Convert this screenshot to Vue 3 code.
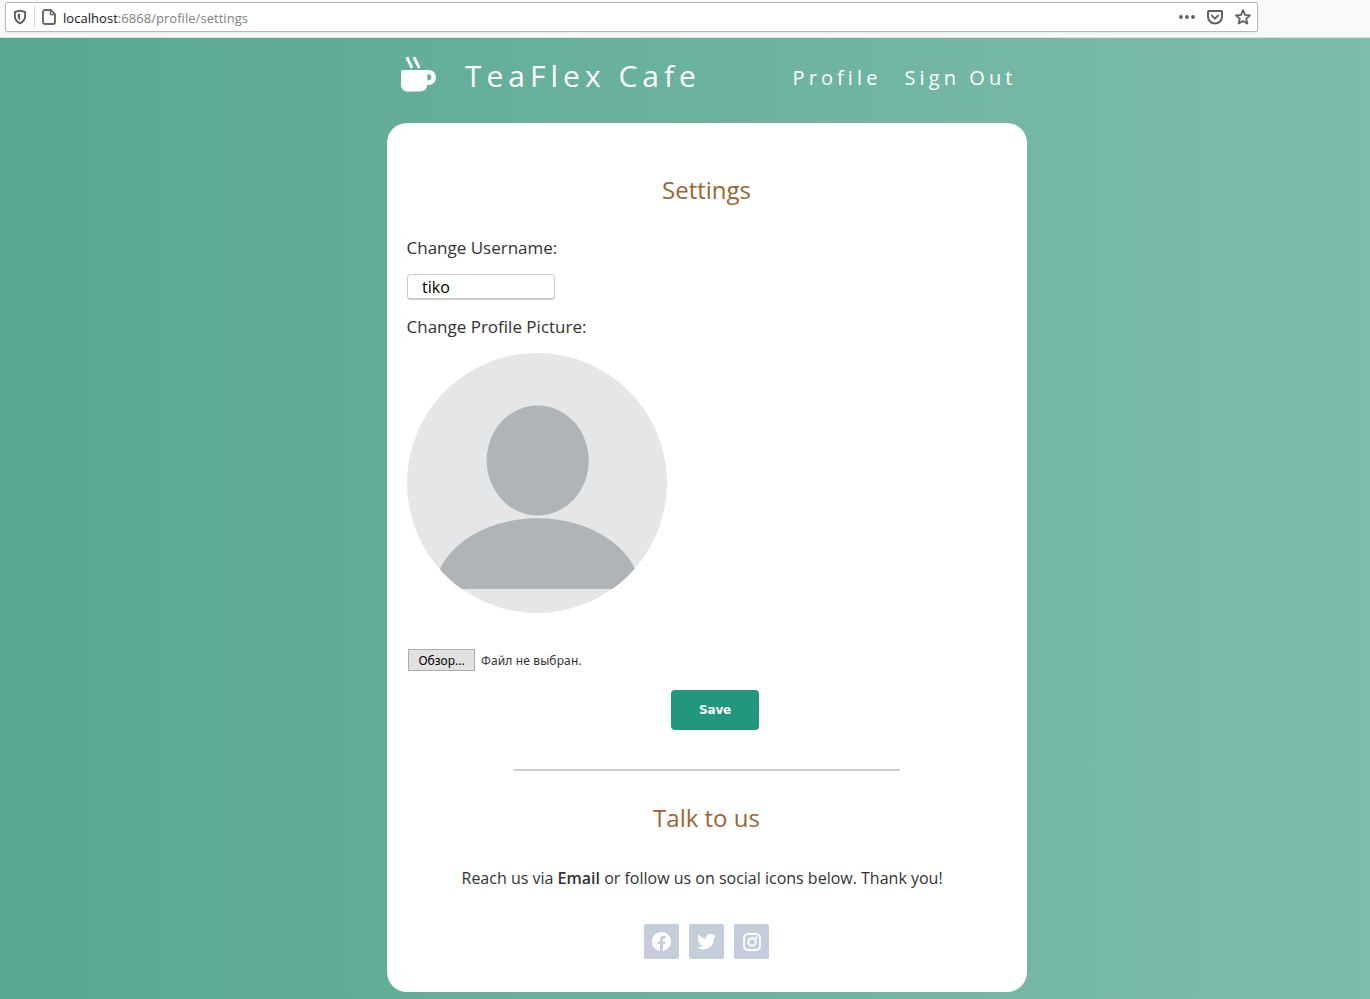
<script setup>
const nav = ['Profile', 'Sign Out']
</script>

<template>
  <div class="page">
    <div class="toolbar">
      <div class="urlbar">
        <svg class="shield" width="14" height="16" viewBox="0 0 14 16">
          <path d="M7 1.7 12.1 3v4.2c0 3.3-1.9 5.6-5.1 7.1-3.2-1.5-5.1-3.8-5.1-7.1V3z" fill="none" stroke="#5c5c5c" stroke-width="1.9" stroke-linejoin="round" />
          <path d="M7 4.6v6.8C5.400 10.300 4.700 9 4.700 7.200V5.100z" fill="#5c5c5c" />
        </svg>
        <span class="split"></span>
        <svg class="doc" width="14" height="16" viewBox="0 0 14 16">
          <path d="M3 1h5.700L13 5.300V13a2 2 0 0 1-2 2H3a2 2 0 0 1-2-2V3a2 2 0 0 1 2-2z" fill="none" stroke="#666" stroke-width="1.900" />
          <path d="M8.500 1v4.600H13" fill="none" stroke="#666" stroke-width="1.300" />
        </svg>
        <span class="url"><b>localhost</b>:6868/profile/settings</span>
        <div class="actions">
          <svg width="16" height="16" viewBox="0 0 16 16" fill="#5f5f5f">
            <circle cx="2" cy="8" r="1.900" /><circle cx="8" cy="8" r="1.900" /><circle cx="14" cy="8" r="1.900" />
          </svg>
          <svg width="16" height="16" viewBox="0 0 16 16" fill="none" stroke="#5f5f5f" stroke-width="2" stroke-linecap="round" stroke-linejoin="round">
            <path d="M1.900 2h12.200a.9.9 0 0 1 .9.900V7.500a7 7 0 0 1-14 0V2.900a.9.9 0 0 1 .9-.9z" />
            <path d="M4.900 6.600 8 9.600l3.100-3" />
          </svg>
          <svg width="16" height="16" viewBox="0 0 16 16" fill="none" stroke="#5f5f5f" stroke-width="1.800" stroke-linejoin="round">
            <path d="m8 1.200 2 4.600 5 .5-3.800 3.300 1.100 5L8 12l-4.300 2.600 1.100-5L1 6.300l5-.5z" />
          </svg>
        </div>
      </div>
    </div>

    <div class="wrap">
      <header>
        <svg class="cup" width="36" height="36" viewBox="0 0 36 36">
          <path fill-rule="evenodd" d="M1 14.700Q1 12.900 2.800 12.900H28.300c4.500 0 7.700 3.100 7.700 7.500s-3.200 7.600-7.700 7.600H27.200c-.3 3.900-3.100 6.400-7 6.400H8c-4.200 0-7-2.700-7-7zM27.400 17.300v6.100h.9a3.050 3.050 0 0 0 0-6.100z" fill="#fff" />
          <path d="M7.300 0C7.500 5.400 11.300 5.600 11.500 11.100M14.500 0c.2 5.400 4 5.600 4.200 11.100" fill="none" stroke="#fff" stroke-width="3" />
        </svg>
        <span class="brand">TeaFlex Cafe</span>
        <nav><a v-for="item in nav" :key="item">{{ item }}</a></nav>
      </header>

      <main>
        <h1>Settings</h1>
        <label class="name-label">Change Username:</label>
        <input type="text" value="tiko" />
        <label class="pic-label">Change Profile Picture:</label>
        <svg class="avatar" width="260" height="260" viewBox="0 0 260 260">
          <defs>
            <clipPath id="round"><circle cx="130" cy="130" r="130" /></clipPath>
            <clipPath id="chest"><rect width="260" height="236" /></clipPath>
          </defs>
          <circle cx="130" cy="130" r="130" fill="#e4e6e7" />
          <ellipse cx="130.700" cy="107.500" rx="51" ry="55" fill="#aeb4b7" />
          <g clip-path="url(#round)">
            <ellipse cx="130.500" cy="241.200" rx="103.500" ry="76" fill="#aeb4b7" clip-path="url(#chest)" />
          </g>
        </svg>
        <div class="file"><button class="browse">Обзор...</button><span>Файл не выбран.</span></div>
        <button class="save">Save</button>
        <hr />
        <h2>Talk to us</h2>
        <p>Reach us via <b>Email</b> or follow us on social icons below. Thank you!</p>
        <div class="social">
          <a>
            <svg width="19" height="19" viewBox="0 0 24 24" fill="#fff"><path d="M24 12.073C24 5.400 18.627 0 12 0S0 5.400 0 12.073C0 18.100 4.388 23.094 10.125 24v-8.437H7.078v-3.490h3.047V9.410c0-3.025 1.792-4.697 4.533-4.697 1.312 0 2.686.236 2.686.236v2.971H15.830c-1.491 0-1.956.930-1.956 1.886v2.267h3.328l-.532 3.490h-2.796V24C19.612 23.094 24 18.100 24 12.073z" /></svg>
          </a>
          <a>
            <svg width="19" height="19" viewBox="0 0 24 24" fill="#fff"><path d="M23.954 4.569a10 10 0 0 1-2.825.775 4.958 4.958 0 0 0 2.163-2.723 9.990 9.990 0 0 1-3.127 1.184 4.920 4.920 0 0 0-8.384 4.482C7.691 8.094 4.066 6.130 1.640 3.161a4.822 4.822 0 0 0-.666 2.475c0 1.710.870 3.213 2.188 4.096a4.904 4.904 0 0 1-2.228-.616v.061a4.923 4.923 0 0 0 3.946 4.827 4.996 4.996 0 0 1-2.212.085 4.937 4.937 0 0 0 4.604 3.417 9.868 9.868 0 0 1-6.102 2.105c-.390 0-.779-.023-1.170-.067a13.995 13.995 0 0 0 7.557 2.209c9.054 0 13.999-7.496 13.999-13.986 0-.209 0-.420-.015-.630a9.936 9.936 0 0 0 2.460-2.548z" /></svg>
          </a>
          <a>
            <svg width="18" height="18" viewBox="0 0 18 18" fill="none" stroke="#fff"><rect x="1" y="1" width="16" height="16" rx="4.300" stroke-width="1.800" /><circle cx="9" cy="9" r="3.700" stroke-width="2" /><circle cx="13.600" cy="4.400" r="1.250" fill="#fff" stroke="none" /></svg>
          </a>
        </div>
      </main>
    </div>
  </div>
</template>

<style>
body { margin: 0; overflow: hidden; }
</style>

<style scoped>
* { box-sizing: border-box; }
.page { height: 999px; overflow: hidden; font-family: "Open Sans", sans-serif; color: #333; background: linear-gradient(90deg, #58a791, #7ebdac); }
.toolbar { height: 38px; background: #f9f9fa; border-bottom: 1px solid #dcdfde; padding: 2px 0 0 5px; }
.urlbar { width: 1253px; height: 30px; background: #fff; border: 1px solid #b9b9b9; border-radius: 2px; box-shadow: 0 1px 3px rgba(0, 0, 0, .08); display: flex; align-items: center; padding: 0 6px 0 7px; }
.split { width: 1px; height: 22px; background: #ddd; margin: 0 7px; }
.url { margin-left: 7px; font-size: 13px; letter-spacing: .04px; color: #808080; padding-top: 2px; white-space: nowrap; }
.url b { font-weight: 400; color: #111; }
.actions { margin-left: auto; display: flex; gap: 12px; }
.wrap { width: 640px; margin-left: 387px; }
header { height: 85px; padding: 19px 0 0 13px; display: flex; color: #fff; }
.cup { overflow: visible; }
.brand { margin: -2px 0 0 29px; font-size: 30px; line-height: 42px; letter-spacing: 5px; width: 327.5px; white-space: nowrap; }
nav { display: flex; gap: 23px; font-size: 20px; line-height: 42px; letter-spacing: 4.1px; white-space: nowrap; }
main { height: 869px; background: #fff; border-radius: 20px; padding: 49px 20px 0; display: flex; flex-direction: column; align-items: flex-start; }
h1, h2 { margin: 0 1px 0 0; font-size: 24px; font-weight: 400; line-height: 36px; color: #996633; align-self: center; }
label { font-size: 17px; line-height: 26px; margin-left: -.5px; }
.name-label { margin-top: 27px; }
input { margin-top: 13px; width: 148px; height: 26px; border: 1px solid #ccc; border-bottom-width: 2px; border-radius: 4px; padding: 0 14px; font: 16px "Open Sans", sans-serif; color: #000; outline: 0; background: #fff; }
.pic-label { margin-top: 14px; }
.avatar { display: block; margin-top: 13px; }
.file { display: flex; align-items: center; margin: 36px 0 0 1px; font: 12px "Noto Sans", sans-serif; letter-spacing: .13px; white-space: nowrap; }
.browse { width: 67px; height: 22px; border: 1px solid #adadad; background: #e1e1e1; padding: 0; font: inherit; color: #000; margin-right: 6px; }
.save { margin: 19px 0 0 264px; width: 88px; height: 40px; border: 0; border-radius: 4px; background: #23967f; color: #fff; font: bold 12px "DejaVu Sans", sans-serif; letter-spacing: -.2px; padding: 0; }
hr { width: 386px; height: 2px; border: 0; background: #ccc; margin: 39px auto 0; }
h2 { margin-top: 29px; }
p { margin: 30px 0 0 54.5px; font-size: 16px; line-height: 24px; white-space: nowrap; }
p b { font-weight: 600; }
.social { display: flex; gap: 10px; margin: 34px 0 0 237px; }
.social a { width: 35px; height: 35px; border-radius: 2px; background: #c5cdda; display: flex; align-items: center; justify-content: center; }
</style>
